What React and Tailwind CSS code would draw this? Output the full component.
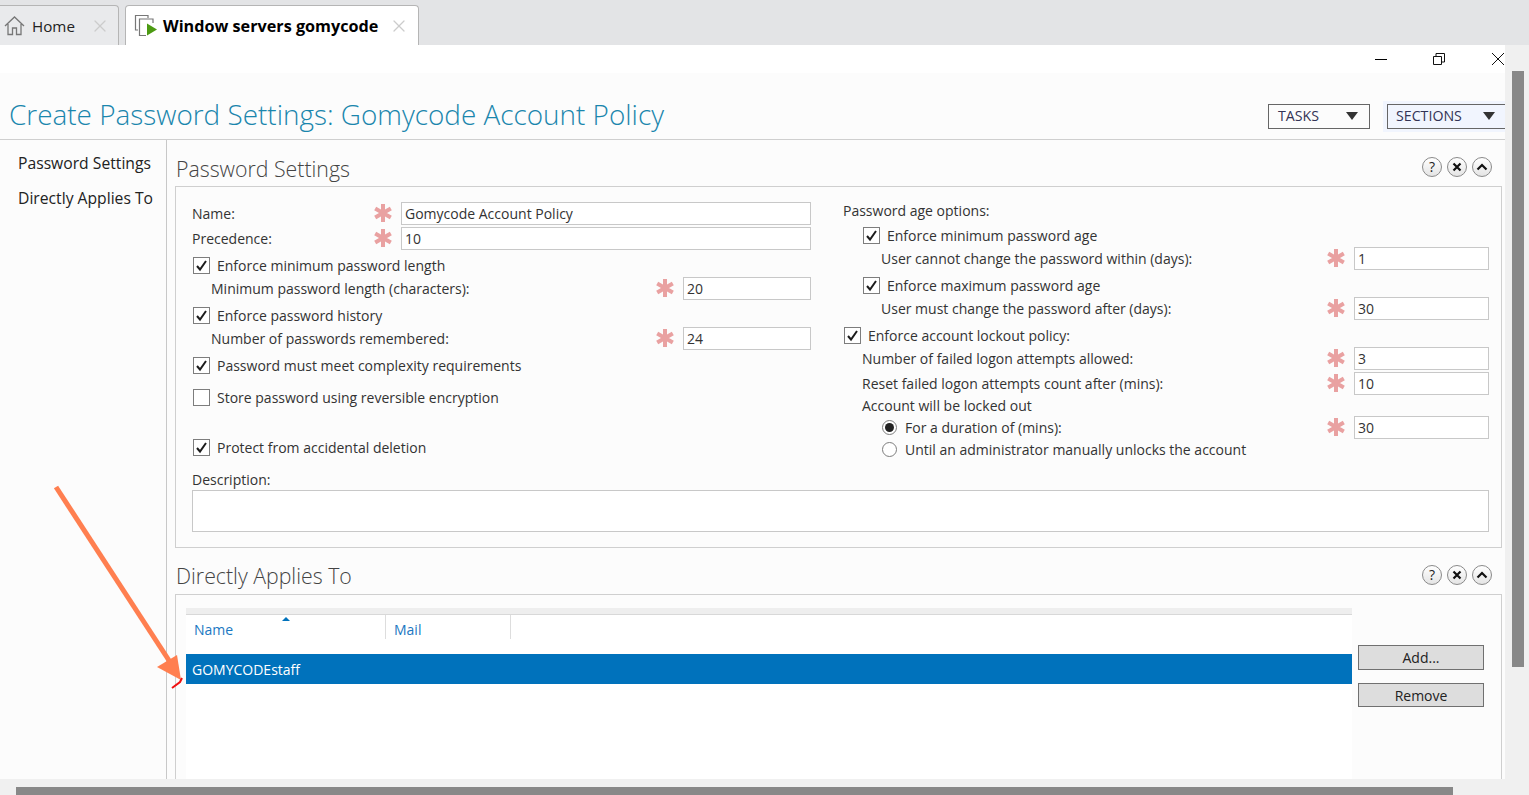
import { X } from "lucide-react";

function Star() {
  return (
    <svg width="20" height="20" viewBox="0 0 20 20" className="shrink-0">
      <path
        d="M10 1V19M2.2 5.5L17.8 14.5M17.8 5.5L2.2 14.5"
        stroke="#e9a1a1"
        strokeWidth="4"
        fill="none"
      />
    </svg>
  );
}

function Check({ checked = true }) {
  return (
    <span className="flex h-[17px] w-[17px] shrink-0 items-center justify-center border border-[#7d7d7d] bg-white">
      {checked && (
        <svg width="13" height="13" viewBox="0 0 13 13">
          <path d="M2 7L5 10.5L11 2" stroke="#1c1c1c" strokeWidth="2" fill="none" />
        </svg>
      )}
    </span>
  );
}

function Radio({ checked }) {
  return (
    <span className="flex h-[15px] w-[15px] shrink-0 items-center justify-center rounded-full border border-[#7d7d7d] bg-white">
      {checked && <span className="h-[9px] w-[9px] rounded-full bg-[#222]" />}
    </span>
  );
}

function CheckRow({ label, checked, className = "" }) {
  return (
    <div className={`flex h-[22px] items-center ${className}`}>
      <Check checked={checked} />
      <span className="ml-[7px]">{label}</span>
    </div>
  );
}

function Field({ label, value, inputClass, className = "" }) {
  return (
    <div className={`flex h-[22px] items-center ${className}`}>
      <span className="flex-1">{label}</span>
      <Star />
      <div className={`ml-[8px] h-[23px] shrink-0 border border-[#c8c8c8] bg-white pl-[3px] leading-[22px] ${inputClass}`}>
        {value}
      </div>
    </div>
  );
}

function PanelIcons() {
  return (
    <div className="flex gap-[5px]">
      <span className="flex h-5 w-5 items-center justify-center rounded-full border border-[#8a8a8a] bg-gradient-to-b from-white to-[#e4e4e4] text-[14px] leading-none text-[#222]">
        ?
      </span>
      <span className="flex h-5 w-5 items-center justify-center rounded-full border border-[#8a8a8a] bg-gradient-to-b from-white to-[#e4e4e4]">
        <svg width="10" height="10" viewBox="0 0 10 10">
          <path d="M1.5 1.5L8.5 8.5M8.5 1.5L1.5 8.5" stroke="#111" strokeWidth="2.2" />
        </svg>
      </span>
      <span className="flex h-5 w-5 items-center justify-center rounded-full border border-[#8a8a8a] bg-gradient-to-b from-white to-[#e4e4e4]">
        <svg width="12" height="8" viewBox="0 0 12 8">
          <path d="M1.5 6.5L6 2L10.5 6.5" stroke="#111" strokeWidth="2.2" fill="none" />
        </svg>
      </span>
    </div>
  );
}

function PanelHeading({ title, textClass = "" }) {
  return (
    <div className="flex h-[46px] shrink-0 items-center justify-between pr-[10px] pt-[8px]">
      <span className={`ml-px text-[21.3px] font-light text-[#444] ${textClass}`}>{title}</span>
      <PanelIcons />
    </div>
  );
}

function App() {
  return (
    <div className="relative flex h-[795px] w-[1529px] flex-col overflow-hidden bg-[#f0f0f0] font-['Open_Sans',sans-serif] text-[14px] text-[#333]">

      {/* TABS */}

      <div className="flex h-[45px] shrink-0 items-end bg-[#e3e4e6]">
        <div className="flex h-10 w-[119px] items-center rounded-tr border-r border-t border-[#b5b5b5] bg-[#e9eaec] pl-[4px]">
          <svg width="21" height="21" viewBox="0 0 21 21" fill="none" stroke="#777" strokeWidth="1.3">
            <path d="M1 11L10.5 2L20 11M4 9V19.5H8.5V13H12.5V19.5H17V9" />
          </svg>
          <span className="ml-[7px] pt-[2px] text-[15.2px] text-[#222]">Home</span>
          <X size={20} strokeWidth={1.5} className="ml-[15px] text-[#ccc]" />
        </div>

        <div className="ml-[6px] flex h-10 w-[294px] items-center rounded-t border-x border-t border-[#b5b5b5] border-b-0 bg-white pl-[8px]">
          <svg width="23" height="23" viewBox="0 0 23 23" fill="none" stroke="#777" strokeWidth="1.2">
            <path d="M4 16H1.5V1.5H14V4" />
            <path d="M12 21.5H5.5V5H19V9" />
            <path d="M13 9.5V21.5L23 15.5Z" fill="#4c9a12" stroke="none" />
          </svg>
          <span className="ml-[6px] pt-[2px] text-[16.2px] font-bold text-black">Window servers gomycode</span>
          <X size={20} strokeWidth={1.5} className="ml-[11px] text-[#ccc]" />
        </div>
      </div>

      <div className="flex min-h-0 flex-1">

        <div className="flex w-[1505px] shrink-0 flex-col">

          {/* WINDOW CONTROLS */}

          <div className="flex h-[28px] shrink-0 items-center justify-end bg-white">
            <span className="h-px w-3 bg-black" />
            <svg width="12" height="12" viewBox="0 0 12 12" fill="none" stroke="#111" className="ml-[46px]">
              <path d="M0.5 3.5H8.5V11.5H0.5ZM3 3.5V0.5H11.5V9H8.5" />
            </svg>
            <svg width="14" height="14" viewBox="0 0 14 14" stroke="#111" className="ml-[46px]">
              <path d="M1 1L13 13M13 1L1 13" />
            </svg>
          </div>

          {/* TITLE */}

          <div className="flex h-[67px] shrink-0 items-center justify-between border-b border-[#cfcfcf] bg-[#fcfcfc] pl-[9px] pt-[18px]">
            <h1 className="text-[27.9px] font-light leading-none text-[#1a86ad]">
              Create Password Settings: Gomycode Account Policy
            </h1>

            <div className="mt-[2px] flex items-center">
              <div className="flex h-[25px] w-[102px] items-center justify-between border border-[#666] pl-[9px] pr-[11px] text-[14.2px] text-[#335]">
                TASKS
                <span className="h-0 w-0 border-x-[6px] border-t-[8px] border-x-transparent border-t-[#333]" />
              </div>
              <div className="ml-[13px] bg-[#f1f5fe] py-[3px] pl-[4px]">
                <div className="flex h-[25px] w-[118px] items-center justify-between border-y border-l border-[#666] pl-[8px] pr-[10px] text-[14.2px] text-[#335]">
                  SECTIONS
                  <span className="h-0 w-0 border-x-[6px] border-t-[8px] border-x-transparent border-t-[#333]" />
                </div>
              </div>
            </div>
          </div>

          <div className="flex min-h-0 flex-1 bg-[#fcfcfc]">

            {/* SIDE NAV */}

            <div className="w-[167px] shrink-0 border-r border-[#c8c8c8] pl-[18px] pt-[11px] text-[15.7px] text-[#222]">
              <div className="h-[35px] leading-[24px]">Password Settings</div>
              <div className="leading-[24px]">Directly Applies To</div>
            </div>

            <div className="flex min-w-0 flex-1 flex-col pl-2 pr-[3px]">

              {/* PASSWORD SETTINGS */}

              <PanelHeading title="Password Settings" textClass="pt-[4px]" />

              <div className="h-[362px] shrink-0 border border-[#cfcfcf] px-[13px]">
                <div className="flex">

                  <div className="ml-[3px] w-[619px] shrink-0 pt-[15px]">
                    <Field label="Name:" value="Gomycode Account Policy" inputClass="w-[410px]" />
                    <Field label="Precedence:" value="10" inputClass="w-[410px]" className="mt-[3px]" />
                    <CheckRow label="Enforce minimum password length" className="mt-[5px] pl-px" />
                    <Field label="Minimum password length (characters):" value="20" inputClass="w-[128px]" className="mt-px pl-[19px]" />
                    <CheckRow label="Enforce password history" className="mt-[5px] pl-px" />
                    <Field label="Number of passwords remembered:" value="24" inputClass="w-[128px]" className="mt-px pl-[19px]" />
                    <CheckRow label="Password must meet complexity requirements" className="mt-[5px] pl-px" />
                    <CheckRow label="Store password using reversible encryption" checked={false} className="mt-[10px] pl-px" />
                    <CheckRow label="Protect from accidental deletion" className="mt-[28px] pl-px" />
                  </div>

                  <div className="ml-[32px] w-[646px] shrink-0 pt-[12px]">
                    <div className="flex h-[22px] items-center">Password age options:</div>
                    <CheckRow label="Enforce minimum password age" className="mt-[3px] pl-[20px]" />
                    <Field label="User cannot change the password within (days):" value="1" inputClass="w-[135px]" className="mt-px pl-[38px]" />
                    <CheckRow label="Enforce maximum password age" className="mt-[5px] pl-[20px]" />
                    <Field label="User must change the password after (days):" value="30" inputClass="w-[135px]" className="mt-px pl-[38px]" />
                    <CheckRow label="Enforce account lockout policy:" className="mt-[5px] pl-px" />
                    <Field label="Number of failed logon attempts allowed:" value="3" inputClass="w-[135px]" className="mt-px pl-[19px]" />
                    <Field label="Reset failed logon attempts count after (mins):" value="10" inputClass="w-[135px]" className="mt-[3px] pl-[19px]" />
                    <div className="flex h-[22px] items-center pl-[19px]">Account will be locked out</div>
                    <div className="flex h-[22px] items-center pl-[39px]">
                      <Radio checked />
                      <span className="ml-2 flex-1">For a duration of (mins):</span>
                      <Star />
                      <div className="ml-[8px] h-[23px] w-[135px] shrink-0 border border-[#c8c8c8] bg-white pl-[3px] leading-[22px]">30</div>
                    </div>
                    <div className="flex h-[22px] items-center pl-[39px]">
                      <Radio />
                      <span className="ml-2">Until an administrator manually unlocks the account</span>
                    </div>
                  </div>

                </div>

                <div className="ml-[3px] mt-[8px] flex h-[22px] items-center">Description:</div>
                <div className="ml-[3px] h-[42px] w-[1297px] border border-[#c8c8c8] bg-white" />
              </div>

              {/* DIRECTLY APPLIES TO */}

              <PanelHeading title="Directly Applies To" textClass="pt-[2px]" />

              <div className="flex min-h-0 flex-1 border-x border-t border-[#cfcfcf] pl-[10px] pr-[18px] pt-[13px]">
                <div className="w-[1166px] shrink-0 bg-white">
                  <div className="h-[6px] bg-[#eeeeee]" />
                  <div className="relative flex h-[40px] border-t border-[#d8d8d8] text-[#1a78c2]">
                    <span className="absolute left-[96px] top-[2px] h-0 w-0 border-x-[4px] border-b-[4px] border-x-transparent border-b-[#0072bc]" />
                    <div className="flex h-[24px] w-[200px] items-center border-r border-[#dddddd] pl-2 pt-[4px]">Name</div>
                    <div className="flex h-[24px] w-[125px] items-center border-r border-[#dddddd] pl-2 pt-[4px]">Mail</div>
                  </div>
                  <div className="flex h-[30px] items-center bg-[#0072bc] pl-[6px] text-white">
                    GOMYCODEstaff
                  </div>
                </div>

                <div className="ml-[6px] w-[126px] shrink-0 pt-[37px] text-[#222]">
                  <div className="flex h-[25px] items-center justify-center border border-[#707070] bg-[#dddddd]">Add...</div>
                  <div className="mt-[13px] flex h-[24px] items-center justify-center border border-[#707070] bg-[#dddddd]">Remove</div>
                </div>
              </div>

            </div>
          </div>
        </div>

        {/* RIGHT SCROLLBAR */}

        <div className="flex-1 bg-[#f0f0f0] pl-[7px] pt-[26px]">
          <div className="h-[596px] w-[12px] bg-[#888888]" />
        </div>
      </div>

      {/* BOTTOM SCROLLBAR */}

      <div className="h-[16px] shrink-0 bg-[#f0f0f0] pl-4 pt-2">
        <div className="h-2 w-[1437px] bg-[#888888]" />
      </div>

      {/* ARROW ANNOTATION */}

      <svg width="1529" height="795" className="pointer-events-none absolute left-0 top-0">
        <path d="M56 487L170 662" stroke="#ff7f50" strokeWidth="5" />
        <path d="M157 667L177 655L181 680Z" fill="#ff7f50" />
        <path d="M172 688L180 682L182 678" stroke="#f01010" strokeWidth="2" fill="none" />
      </svg>

    </div>
  );
}

export default App;
